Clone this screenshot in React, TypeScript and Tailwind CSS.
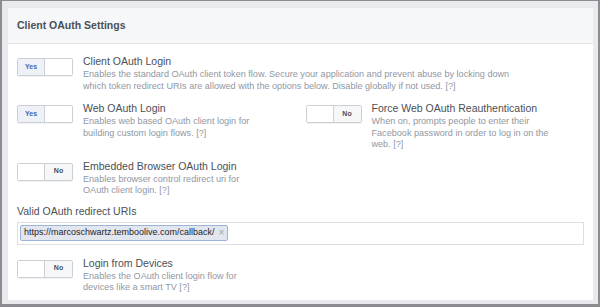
import React from "react";

function Toggle({ on }: { on: boolean }) {
  return (
    <div className="flex h-[18px] w-[56px] shrink-0 overflow-hidden rounded-[2px] border border-[#ccd0d5] shadow-[0_1px_0_rgba(0,0,0,0.05)]">
      <div
        className={`flex w-1/2 items-center justify-center border-r border-[#ccd0d5] text-[7px] font-bold ${
          on ? "bg-[#eef1f7] text-[#4267b2]" : "bg-white"
        }`}
      >
        {on ? "Yes" : ""}
      </div>
      <div
        className={`flex w-1/2 items-center justify-center text-[7px] font-bold ${
          on ? "bg-white" : "bg-[#f6f7f9] text-[#4b4f56]"
        }`}
      >
        {on ? "" : "No"}
      </div>
    </div>
  );
}

function Setting({
  on,
  title,
  desc,
  width,
}: {
  on: boolean;
  title: string;
  desc: string;
  width: string;
}) {
  return (
    <div className="flex items-start gap-[10px]">
      <Toggle on={on} />
      <div className="-mt-[3px]">
        <div className="text-[10.5px] leading-[13px] text-[#4b4f56]">{title}</div>
        <div className={`mt-[1px] text-[9.1px] leading-[11.5px] text-[#9197a3] ${width}`}>{desc}</div>
      </div>
    </div>
  );
}

export default function App() {
  return (
    <div
      className="h-[307px] w-[600px] border-l-2 border-t border-r-2 border-b-[3px] border-[#8d8d91] bg-[#e9eaed] pl-[6px] pr-[5px] pt-[7px] pb-[4px]"
      style={{ fontFamily: '"Liberation Sans", Arial, sans-serif' }}
    >
      <div className="h-full bg-white">
        <div className="flex h-[36px] items-center border-b border-[#e5e5e5] bg-[#f6f7f9] px-[9px]">
          <span className="text-[10.5px] font-bold text-[#4b4f56]">Client OAuth Settings</span>
        </div>
        <div className="px-[9px] pt-[14px]">
          <Setting
            on
            title="Client OAuth Login"
            desc="Enables the standard OAuth client token flow. Secure your application and prevent abuse by locking down which token redirect URIs are allowed with the options below. Disable globally if not used.  [?]"
            width="w-[440px]"
          />
          <div className="mt-[13px] grid grid-cols-2 gap-[10px]">
            <Setting
              on
              title="Web OAuth Login"
              desc="Enables web based OAuth client login for building custom login flows.  [?]"
              width="w-[180px]"
            />
            <Setting
              on={false}
              title="Force Web OAuth Reauthentication"
              desc="When on, prompts people to enter their Facebook password in order to log in on the web. [?]"
              width="w-[180px]"
            />
          </div>
          <div className="mt-[12px]">
            <Setting
              on={false}
              title="Embedded Browser OAuth Login"
              desc="Enables browser control redirect uri for OAuth client login.  [?]"
              width="w-[180px]"
            />
          </div>
          <div className="mt-[8px] text-[10.5px] leading-[13px] text-[#4b4f56]">Valid OAuth redirect URIs</div>
          <div className="mt-[4px] flex h-[23px] items-center border border-[#dddfe2] px-[2px]">
            <div className="flex h-[16px] items-center gap-[4px] rounded-[2px] border border-[#9cb4d8] bg-[#e2e6ee] px-[3px]">
              <span className="text-[9px] text-[#1d2129]">https://marcoschwartz.temboolive.com/callback/</span>
              <span className="text-[10px] leading-none text-[#a0a4ab]">×</span>
            </div>
          </div>
          <div className="mt-[15px]">
            <Setting
              on={false}
              title="Login from Devices"
              desc="Enables the OAuth client login flow for devices like a smart TV [?]"
              width="w-[180px]"
            />
          </div>
        </div>
      </div>
    </div>
  );
}
